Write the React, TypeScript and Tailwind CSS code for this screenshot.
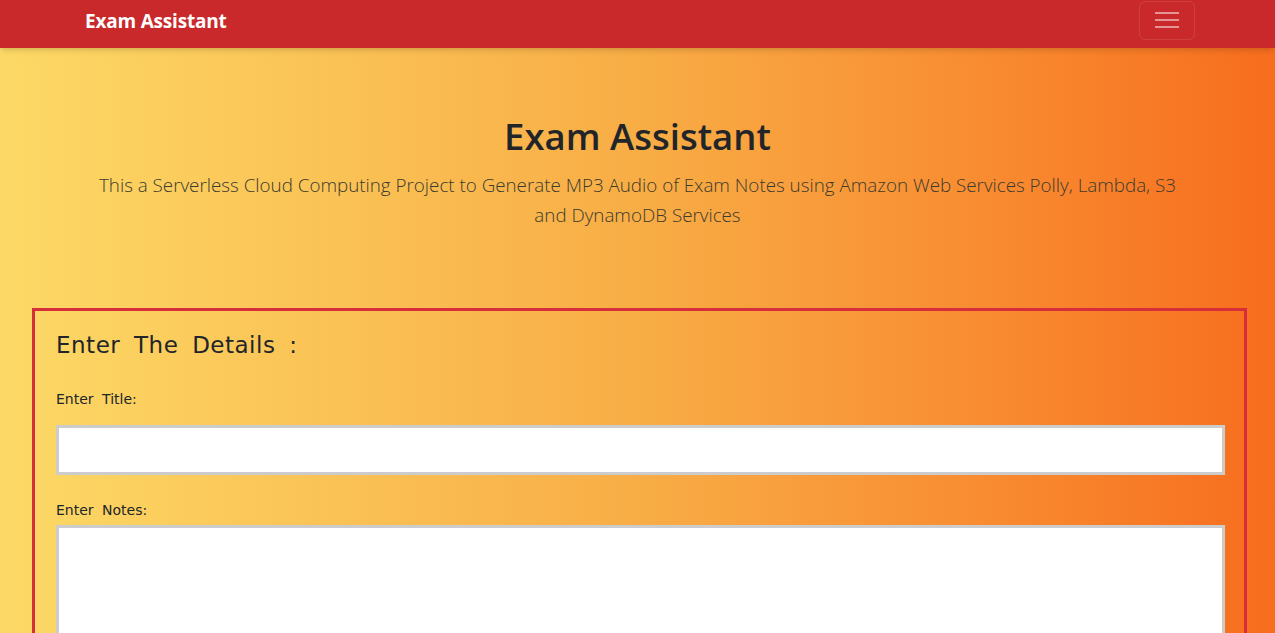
import React, { useState } from "react";

function App() {
  const [title, setTitle] = useState("");
  const [notes, setNotes] = useState("");

  return (
    <div className="min-h-screen bg-gradient-to-r from-[#fcd966] via-[#f8ad45] to-[#f76d1d] font-['Open_Sans',sans-serif]">
      <nav className="h-12 bg-[#c9292a] flex items-center justify-between pl-[85px] pr-[80px] shadow-md">
        <span className="-mt-[6px] text-white font-bold text-[19px] tracking-[-0.2px]">
          Exam Assistant
        </span>
        <button className="w-14 h-[39px] -mt-2 border border-white/10 rounded-md flex flex-col items-center justify-center gap-[5px]">
          <span className="block w-[24px] h-[2px] bg-white/50" />
          <span className="block w-[24px] h-[2px] bg-white/50" />
          <span className="block w-[24px] h-[2px] bg-white/50" />
        </button>
      </nav>

      <header className="pt-[64px] pb-[78px] text-center px-[80px]">
        <h1 className="text-[36.5px] font-semibold text-[#212529] leading-[48px]">
          Exam Assistant
        </h1>
        <p className="mt-[10px] text-[18.8px] font-light text-[#3b3b2f] leading-[30px] max-w-[1085px] mx-auto">
          This a Serverless Cloud Computing Project to Generate MP3 Audio of Exam
          Notes using Amazon Web Services Polly, Lambda, S3 and DynamoDB Services
        </p>
      </header>

      <div className="ml-[32px] mr-[28px] border-[3px] border-[#d62e3a] pl-[21px] pr-[19px] pt-[16px] pb-8 font-['DejaVu_Sans',sans-serif] text-[#212529]">
        <h2 className="text-[23px] tracking-[0.5px] [word-spacing:6px] leading-[36px]">
          Enter The Details :
        </h2>
        <label
          htmlFor="title"
          className="block mt-[26px] text-[14px] leading-[20px] [word-spacing:4px]"
        >
          Enter Title:
        </label>
        <input
          id="title"
          type="text"
          value={title}
          onChange={(e) => setTitle(e.target.value)}
          className="mt-[16px] block w-full h-[50px] bg-white border-[3px] border-[#cccccc] outline-none px-2"
        />
        <label
          htmlFor="notes"
          className="block mt-[25px] text-[14px] leading-[20px] [word-spacing:4px]"
        >
          Enter Notes:
        </label>
        <textarea
          id="notes"
          rows={8}
          value={notes}
          onChange={(e) => setNotes(e.target.value)}
          className="mt-[5px] block w-full bg-white border-[3px] border-[#cccccc] outline-none p-2"
        ></textarea>
      </div>
    </div>
  );
}

export default App;
